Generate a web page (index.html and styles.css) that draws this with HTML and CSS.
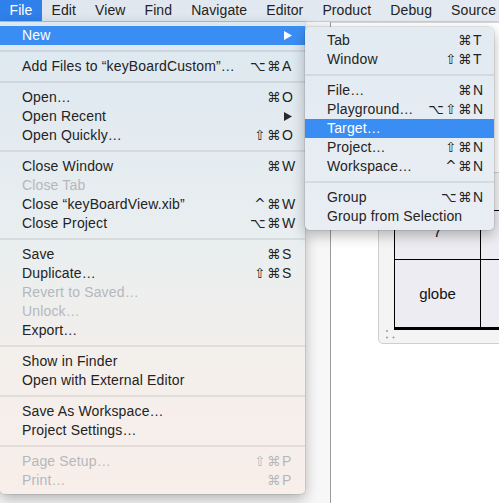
FILE: index.html
```html
<!DOCTYPE html>
<html>
<head>
<meta charset="utf-8">
<link rel="stylesheet" href="styles.css">
</head>
<body>
<div class="menubar">
  <span class="mb-item active">File</span>
  <span class="mb-item">Edit</span>
  <span class="mb-item">View</span>
  <span class="mb-item">Find</span>
  <span class="mb-item">Navigate</span>
  <span class="mb-item">Editor</span>
  <span class="mb-item">Product</span>
  <span class="mb-item">Debug</span>
  <span class="mb-item">Source</span>
</div>

<div class="workspace">
  <div class="sidepanel"></div>
  <div class="canvas">
    <div class="xib">
      <div class="kbgrid">
        <div class="cell row1">7</div>
        <div class="cell row1"></div>
        <div class="cell row2">globe</div>
        <div class="cell row2"></div>
      </div>
      <svg class="grip" width="10" height="10" viewBox="0 0 10 10">
        <circle cx="2" cy="2" r="1" fill="#9a9a9a"/>
        <circle cx="2" cy="8.5" r="1" fill="#9a9a9a"/>
        <circle cx="8.5" cy="8.5" r="1" fill="#9a9a9a"/>
      </svg>
    </div>
  </div>
</div>

<div class="menu file-menu">
  <div class="item hl"><span class="label">New</span><svg class="arrow" width="8" height="9" viewBox="0 0 8 9"><polygon points="0,0 8,4.5 0,9" fill="#fff"/></svg></div>
  <div class="sep"></div>
  <div class="item"><span class="label">Add Files to “keyBoardCustom”…</span><span class="sc"><span class="mods">⌥⌘</span><span class="key">A</span></span></div>
  <div class="sep"></div>
  <div class="item"><span class="label">Open…</span><span class="sc"><span class="mods">⌘</span><span class="key">O</span></span></div>
  <div class="item"><span class="label">Open Recent</span><svg class="arrow" width="8" height="9" viewBox="0 0 8 9"><polygon points="0,0 8,4.5 0,9" fill="#2a2a2a"/></svg></div>
  <div class="item"><span class="label">Open Quickly…</span><span class="sc"><span class="mods">⇧⌘</span><span class="key">O</span></span></div>
  <div class="sep"></div>
  <div class="item"><span class="label">Close Window</span><span class="sc"><span class="mods">⌘</span><span class="key">W</span></span></div>
  <div class="item dis"><span class="label">Close Tab</span></div>
  <div class="item"><span class="label">Close “keyBoardView.xib”</span><span class="sc"><span class="mods">^⌘</span><span class="key">W</span></span></div>
  <div class="item"><span class="label">Close Project</span><span class="sc"><span class="mods">⌥⌘</span><span class="key">W</span></span></div>
  <div class="sep"></div>
  <div class="item"><span class="label">Save</span><span class="sc"><span class="mods">⌘</span><span class="key">S</span></span></div>
  <div class="item"><span class="label">Duplicate…</span><span class="sc"><span class="mods">⇧⌘</span><span class="key">S</span></span></div>
  <div class="item dis"><span class="label">Revert to Saved…</span></div>
  <div class="item dis"><span class="label">Unlock…</span></div>
  <div class="item"><span class="label">Export…</span></div>
  <div class="sep"></div>
  <div class="item"><span class="label">Show in Finder</span></div>
  <div class="item"><span class="label">Open with External Editor</span></div>
  <div class="sep"></div>
  <div class="item"><span class="label">Save As Workspace…</span></div>
  <div class="item"><span class="label">Project Settings…</span></div>
  <div class="sep"></div>
  <div class="item dis"><span class="label">Page Setup…</span><span class="sc"><span class="mods">⇧⌘</span><span class="key">P</span></span></div>
  <div class="item dis"><span class="label">Print…</span><span class="sc"><span class="mods">⌘</span><span class="key">P</span></span></div>
</div>

<div class="menu submenu">
  <div class="item"><span class="label">Tab</span><span class="sc"><span class="mods">⌘</span><span class="key">T</span></span></div>
  <div class="item"><span class="label">Window</span><span class="sc"><span class="mods">⇧⌘</span><span class="key">T</span></span></div>
  <div class="sep"></div>
  <div class="item"><span class="label">File…</span><span class="sc"><span class="mods">⌘</span><span class="key">N</span></span></div>
  <div class="item"><span class="label">Playground…</span><span class="sc"><span class="mods">⌥⇧⌘</span><span class="key">N</span></span></div>
  <div class="item hl"><span class="label">Target…</span></div>
  <div class="item"><span class="label">Project…</span><span class="sc"><span class="mods">⇧⌘</span><span class="key">N</span></span></div>
  <div class="item"><span class="label">Workspace…</span><span class="sc"><span class="mods">^⌘</span><span class="key">N</span></span></div>
  <div class="sep"></div>
  <div class="item"><span class="label">Group</span><span class="sc"><span class="mods">⌥⌘</span><span class="key">N</span></span></div>
  <div class="item"><span class="label">Group from Selection</span></div>
</div>
</body>
</html>
```

FILE: styles.css
```css
* { box-sizing: border-box; }

html, body {
  margin: 0;
  padding: 0;
}

body {
  width: 499px;
  height: 503px;
  overflow: hidden;
  position: relative;
  background: #ffffff;
  font-family: "Liberation Sans", "DejaVu Sans", sans-serif;
  font-size: 14px;
  color: #232323;
}

/* ---------- menu bar ---------- */
.menubar {
  height: 22px;
  display: flex;
  background: linear-gradient(90deg, #dfe6ee, #e4eaf1);
  border-bottom: 1px solid #c9cdd2;
  white-space: nowrap;
  overflow: hidden;
}

.mb-item {
  padding: 0 9.5px;
  line-height: 21px;
  height: 21px;
  letter-spacing: 0.1px;
}

.mb-item.active {
  background: #2f80ea;
  color: #ffffff;
}

/* ---------- background window ---------- */
.workspace {
  display: flex;
  height: 481px;
}

.sidepanel {
  width: 331px;
  background: #f7f7f7;
  border-right: 1px solid #9b9b9b;
}

.canvas {
  flex: 1;
  position: relative;
  background: #ffffff;
  border-top: 1px solid #d8d8d8;
  overflow: hidden;
}

.xib {
  position: absolute;
  left: 47px;
  top: 149px;
  width: 250px;
  height: 172px;
  background: #f4f4f4;
  border: 1px solid #cfcfcf;
  border-radius: 5px;
  display: flex;
  flex-direction: column;
  justify-content: flex-end;
  padding: 0 0 13px 15px;
}

.kbgrid {
  display: grid;
  grid-template-columns: 86px 86px;
  border-left: 1px solid #000;
  border-bottom: 3px solid #000;
}

.cell {
  background: #ececf2;
  border-top: 1px solid #000;
  border-right: 1px solid #000;
  display: flex;
  align-items: center;
  justify-content: center;
  font-size: 15px;
  color: #111;
}

.cell.row1 { height: 49px; padding-bottom: 8px; }
.cell.row2 { height: 68px; }

.grip {
  position: absolute;
  left: 6px;
  bottom: 4px;
}

/* ---------- menus ---------- */
.menu {
  position: absolute;
  padding: 4px 0;
  white-space: nowrap;
  letter-spacing: 0.15px;
}

.file-menu {
  left: 0;
  top: 22px;
  width: 305px;
  border-radius: 0 0 5px 5px;
  background: linear-gradient(180deg, #dde8f1 0%, #e9eef0 45%, #f4efeb 75%, #f8eeea 100%);
  box-shadow: 0 5px 14px rgba(0, 0, 0, 0.28), 0 0 0 1px rgba(0, 0, 0, 0.08);
}

.submenu {
  left: 305px;
  top: 27px;
  width: 189px;
  border-radius: 5px;
  background: linear-gradient(180deg, #e2eaf2, #e8eef3);
  box-shadow: 0 5px 14px rgba(0, 0, 0, 0.28), 0 0 0 1px rgba(0, 0, 0, 0.08);
}

.item {
  height: 19px;
  line-height: 19px;
  display: flex;
  align-items: center;
  padding: 0 9px 0 22px;
}

.submenu .item {
  padding: 0 7px 0 22px;
}

.item.hl {
  background: #3a8ef3;
  color: #ffffff;
}

.item.dis {
  color: #b5b8bb;
}

.label {
  flex: 1;
}

.sc {
  display: flex;
  margin-left: auto;
}

.mods {
  font-family: "DejaVu Sans", sans-serif;
  font-size: 13.5px;
  letter-spacing: 1.5px;
  text-align: right;
}

.key {
  width: 14px;
}

.arrow {
  margin-right: 4px;
}

.sep {
  height: 12px;
  padding-top: 5px;
}

.sep::before {
  content: "";
  display: block;
  height: 2px;
  background: rgba(0, 0, 0, 0.075);
}
```
